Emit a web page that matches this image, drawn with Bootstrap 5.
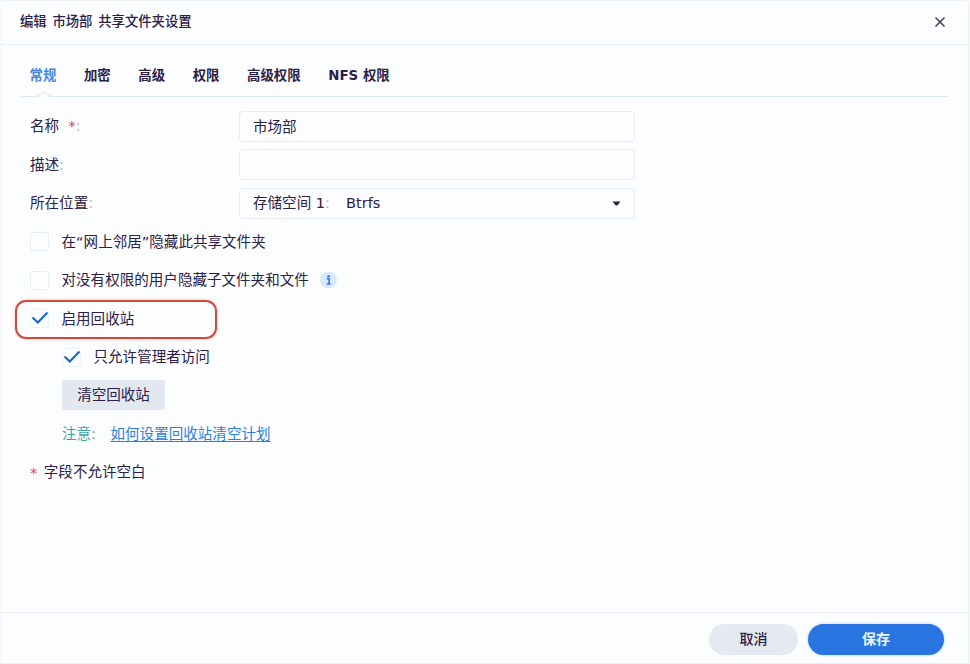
<!DOCTYPE html>
<html lang="zh-CN">
<head>
<meta charset="utf-8">
<meta name="viewport" content="width=device-width, initial-scale=1">
<title>编辑 市场部 共享文件夹设置</title>
<link href="https://cdn.jsdelivr.net/npm/bootstrap@5.3.0/dist/css/bootstrap.min.css" rel="stylesheet">
<style>
body{background:#fcfdff;color:#2b2147;font-family:"DejaVu Sans","Noto Sans CJK SC",sans-serif;font-size:14.55px;line-height:20px;overflow:hidden}
.dialog{width:969px;height:664px;border:1px solid #eaf0f6;border-left-color:#f3f6fa;border-radius:4px 4px 0 0}
.dialog-head{height:44px;border-bottom:1px solid #e8eff4;padding:0 22px 1px 19px}
.dialog-title{font-size:13.35px;font-weight:500;word-spacing:1.5px;line-height:20px}
.close-btn{line-height:0;color:#47395c}
.tabs{margin:0 20px;height:52px;border-bottom:1px solid #dbe6ed;padding:21px 0 0 8.6px;gap:27.6px;font-size:13.4px;font-weight:700}
.tabs .nav-link{padding:0;color:#2b2147;line-height:20px;position:relative}
.tabs .nav-link.active{color:#4385e6}
.notch{position:absolute;left:5px;top:25px}
.form-area{padding:10px 0 0 29px}
.line{height:38.5px}
.field-label{width:209px}
.form-area .form-control,.form-area .pick{width:396px;height:31px;min-height:0;border:1px solid #e4ecf2;border-radius:4px;background:#fdfdff;color:#2b2147;font-size:14.55px;line-height:20px;padding:0 13px;box-shadow:none}
.form-area .form-control{padding-bottom:2px}
.box{width:19px;height:19px;border:1px solid #e6edf4;border-radius:3px;margin-right:12.5px;background:#fdfeff;flex:none}
.box.on{border-color:#edf3f9}
.box svg{display:block;margin:-1px 0 0 -1px}
.req{color:#d8433a}
.faint{color:#b3bac9}
.sub{padding-left:32px}
.ringed{position:relative}
.ring{position:absolute;left:-15px;top:0;width:202px;height:39px;border:2px solid #d3493a;border-radius:11px;box-shadow:0 0 3px #f9b9ae}
.clear-btn{width:103px;height:30px;border:0;border-radius:3px;background:#e3e8f0;color:#2b2147;font-size:14.55px;line-height:20px;padding:0;margin-top:-1px}
.tip{color:#42a2a4;width:48.5px}
.tip-link{color:#2e7de0;text-decoration:underline;text-underline-offset:2px}
.blank-note{margin:-1px 0 0 6.5px}
.dialog-foot{height:51px;border-top:1px solid #edf1f6;padding:2px 24px 0 0;gap:10px}
.dialog-foot .btn{height:31px;border:0;padding:0;font-size:14px;line-height:20px;font-weight:500}
.btn-cancel{width:89px;background:#e5e9f1;color:#2b2147}
.btn-save{width:136px;background:#2874e0;color:#eef5ff;box-shadow:0 0 3px #a9d0fb}
.dialog-foot .btn-save{font-weight:700}
</style>
</head>
<body>
<div class="dialog d-flex flex-column">
  <header class="dialog-head d-flex align-items-center justify-content-between flex-shrink-0">
    <div class="dialog-title">编辑 市场部 共享文件夹设置</div>
    <div class="close-btn"><svg width="12" height="12" viewBox="0 0 12 12" fill="none" stroke="currentColor" stroke-width="1.5"><path d="M1.500 1.500l9 9M10.500 1.500l-9 9"/></svg></div>
  </header>
  <nav class="tabs nav flex-nowrap flex-shrink-0 align-items-start">
    <a class="nav-link active">常规<svg class="notch" width="18" height="7" viewBox="0 0 18 7"><path d="M0 6.500H1.500C4 6.500 6.500 1.500 9 1.500S14 6.500 16.500 6.500H18V7H0z" fill="#fcfdff"/><path d="M0 5.500H1C4 5.500 6.500 1 9 1S14 5.500 17 5.500H18" fill="none" stroke="#dbe6ed"/></svg></a>
    <a class="nav-link">加密</a>
    <a class="nav-link">高级</a>
    <a class="nav-link">权限</a>
    <a class="nav-link">高级权限</a>
    <a class="nav-link">NFS 权限</a>
  </nav>
  <main class="form-area flex-grow-1">
    <div class="line d-flex align-items-center"><div class="field-label">名称&nbsp; <span class="req">*</span><span class="faint">:</span></div><input class="form-control" value="市场部"></div>
    <div class="line d-flex align-items-center"><div class="field-label">描述<span class="faint">:</span></div><input class="form-control"></div>
    <div class="line d-flex align-items-center"><div class="field-label">所在位置<span class="faint">:</span></div>
      <div class="pick d-flex align-items-center justify-content-between"><span>存储空间 1<span class="faint">:</span><span class="ms-3">Btrfs</span></span><svg width="9" height="5" viewBox="0 0 8 5"><path d="M0 .5h8L5 4.200Q4 5 3 4.200z" fill="#2b2147"/></svg></div></div>
    <div class="line d-flex align-items-center"><span class="box"></span>在“网上邻居”隐藏此共享文件夹</div>
    <div class="line d-flex align-items-center"><span class="box"></span>对没有权限的用户隐藏子文件夹和文件
      <svg class="ms-2" width="20" height="20" viewBox="0 0 20 20"><circle cx="11.500" cy="10" r="8.500" fill="#d9e9fd"/><circle cx="11.500" cy="6.200" r="1.300" fill="#2b78df"/><path d="M9.800 8.700h2.300v5M9.700 14h4" fill="none" stroke="#2b78df" stroke-width="1.600"/></svg></div>
    <div class="line d-flex align-items-center ringed"><span class="ring"></span><span class="box on"><svg width="19" height="18" viewBox="0 0 19 18"><path d="M2.500 8.500l5.300 5L17.500 3.500" fill="none" stroke="#1763cf" stroke-width="2"/></svg></span>启用回收站</div>
    <div class="line sub d-flex align-items-center"><span class="box on"><svg width="19" height="18" viewBox="0 0 19 18"><path d="M2.500 8.500l5.300 5L17.500 3.500" fill="none" stroke="#1763cf" stroke-width="2"/></svg></span>只允许管理者访问</div>
    <div class="line sub d-flex align-items-center"><button class="btn clear-btn">清空回收站</button></div>
    <div class="line sub d-flex align-items-center"><span class="tip">注意:</span><a class="tip-link">如何设置回收站清空计划</a></div>
    <div class="line d-flex align-items-center"><span class="req">*</span><span class="blank-note">字段不允许空白</span></div>
  </main>
  <footer class="dialog-foot d-flex align-items-center justify-content-end flex-shrink-0">
    <button class="btn btn-cancel rounded-pill">取消</button>
    <button class="btn btn-save rounded-pill">保存</button>
  </footer>
</div>
<script src="https://cdn.jsdelivr.net/npm/bootstrap@5.3.0/dist/js/bootstrap.bundle.min.js"></script>
</body>
</html>
